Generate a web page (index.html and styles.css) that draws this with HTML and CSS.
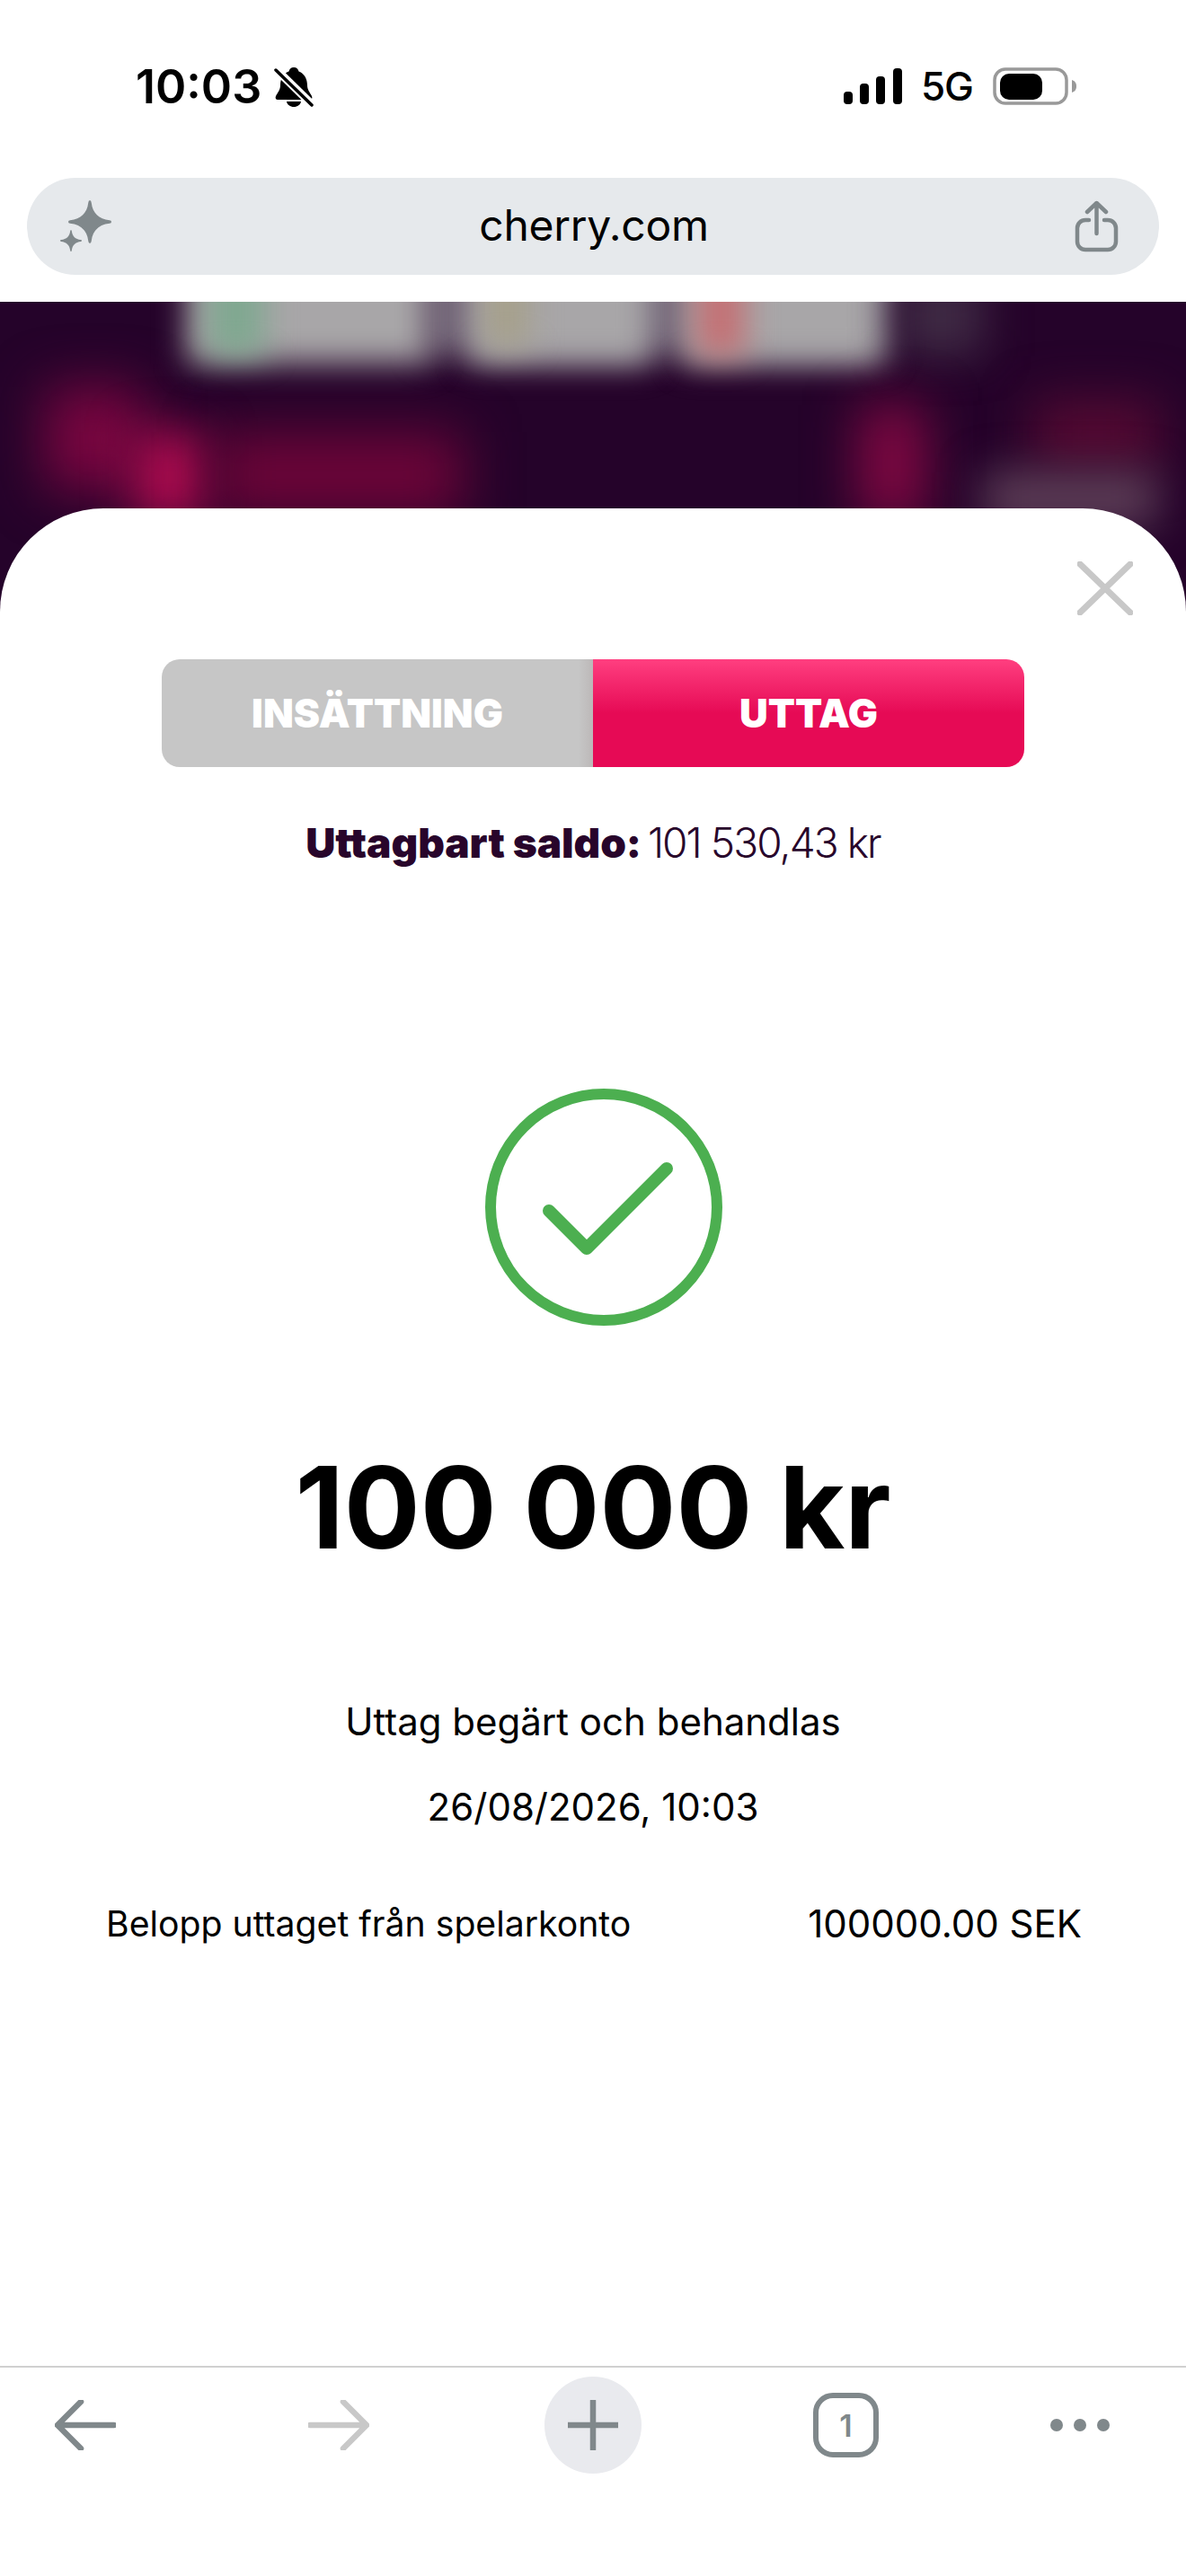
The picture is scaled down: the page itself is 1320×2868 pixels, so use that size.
FILE: index.html
```html
<!DOCTYPE html>
<html>
    <head>
        <title>cherry.com</title>
        <meta charset="utf-8" />
        <link rel="stylesheet" href="styles.css">
    </head>
    <body>
        <header class="status">
            <div class="status-left">
                <span class="time">10:03</span>
                <svg class="bell" viewBox="0 0 44 44">
                    <path d="M22 0c3 0 5 2 5.500 4.500C34 7 37 13 37 20c0 5 3 8 5 12 1 2 0 4-2 4H4c-2 0-3-2-2-4 2-4 5-7 5-12C7 13 10 7 16.500 4.500 17 2 19 0 22 0z" fill="#000"/>
                    <path d="M14 38h16c-.5 3.500-4 6-8 6s-7.500-2.500-8-6z" fill="#000"/>
                    <path d="M1 1l42 41" stroke="#fff" stroke-width="9"/>
                    <path d="M2 3l40 39" stroke="#000" stroke-width="3.500" stroke-linecap="round"/>
                </svg>
            </div>
            <div class="status-right">
                <svg class="signal" viewBox="0 0 65 40">
                    <rect x="0" y="26" width="10" height="14" rx="4" />
                    <rect x="18" y="17" width="10" height="23" rx="4" />
                    <rect x="36" y="9" width="10" height="31" rx="4" />
                    <rect x="55" y="0" width="10" height="40" rx="4" />
                </svg>
                <span class="net">5G</span>
                <svg class="battery" viewBox="0 0 93 42">
                    <rect x="2" y="2" width="80" height="38" rx="12" fill="none" stroke="#999" stroke-width="3.500"/>
                    <rect x="8" y="7" width="47" height="29" rx="10" fill="#000"/>
                    <path d="M88 14c3 1 5 3 5 7s-2 6-5 7z" fill="#999"/>
                </svg>
            </div>
        </header>

        <div class="urlbar">
            <svg class="spark" viewBox="0 0 60 60">
                <path d="M34 1q1.500 0 1.800 3C37 15 44 22 56 23.200q2 .3 2 1.800t-2 1.800C44 28 37 35 35.800 46q-.3 3-1.800 3t-1.800-3C31 35 24 28 12 26.800q-2-.3-2-1.800t2-1.800C24 22 31 15 32.200 4q.3-3 1.800-3z" fill="#80888b"/>
                <path transform="translate(13 46) scale(.5) translate(-34 -25)" d="M34 1q1.500 0 1.800 3C37 15 44 22 56 23.200q2 .3 2 1.800t-2 1.800C44 28 37 35 35.800 46q-.3 3-1.800 3t-1.800-3C31 35 24 28 12 26.800q-2-.3-2-1.800t2-1.800C24 22 31 15 32.200 4q.3-3 1.800-3z" fill="#80888b"/>
            </svg>
            <span class="host">cherry.com</span>
            <svg class="share" viewBox="0 0 50 58">
                <path d="M16 22h-4a9 9 0 0 0-9 9v15a9 9 0 0 0 9 9h25a9 9 0 0 0 9-9V31a9 9 0 0 0-9-9h-4" fill="none" stroke="#80888b" stroke-width="4.500" stroke-linecap="round"/>
                <path d="M24.500 37V3M14 13L24.500 3 35 13" fill="none" stroke="#80888b" stroke-width="4.500" stroke-linecap="round" stroke-linejoin="round"/>
            </svg>
        </div>

        <main class="site">
            <div class="blur blur-band"></div>
            <div class="blur blur-grey blur-a"></div>
            <div class="blur blur-grey blur-b"></div>
            <div class="blur blur-grey blur-c"></div>
            <div class="blur blur-green"></div>
            <div class="blur blur-tan"></div>
            <div class="blur blur-red"></div>
            <div class="blur blur-dim"></div>
            <div class="blur blur-logo1"></div>
            <div class="blur blur-logo2"></div>
            <div class="blur blur-logo3"></div>
            <div class="blur blur-logo4"></div>
            <div class="blur blur-login"></div>
            <div class="blur blur-reg"></div>

            <section class="sheet">
                <svg class="close" viewBox="0 0 62 60">
                    <path d="M3 3l56 54M59 3L3 57" stroke="#c8c8c8" stroke-width="7" stroke-linecap="round"/>
                </svg>

                <div class="tabs">
                    <div class="tab tab-off">INSÄTTNING</div>
                    <div class="tab tab-on">UTTAG</div>
                </div>

                <p class="saldo"><b>Uttagbart saldo:</b> 101 530,43 kr</p>

                <svg class="check" viewBox="0 0 264 264">
                    <circle cx="132" cy="132" r="126" fill="none" stroke="#4caf50" stroke-width="12"/>
                    <path d="M71 136l42 42 89-89" fill="none" stroke="#4caf50" stroke-width="14" stroke-linecap="round" stroke-linejoin="round"/>
                </svg>

                <h1 class="amount">100 000 kr</h1>
                <p class="line line-state">Uttag begärt och behandlas</p>
                <p class="line line-date">26/08/2026, 10:03</p>

                <div class="row">
                    <span class="row-label">Belopp uttaget från spelarkonto</span>
                    <span class="row-value">100000.00 SEK</span>
                </div>
            </section>
        </main>

        <footer class="toolbar">
            <svg class="tool" viewBox="0 0 68 56">
                <path d="M66 28H4M29 2L3 28l26 26" fill="none" stroke="#80888b" stroke-width="6.500" stroke-linecap="round" stroke-linejoin="round"/>
            </svg>
            <svg class="tool tool-fwd" viewBox="0 0 68 56">
                <path d="M2 28h62M39 2l26 26-26 26" fill="none" stroke="#c8c8c8" stroke-width="6.500" stroke-linecap="round" stroke-linejoin="round"/>
            </svg>
            <div class="plus">
                <svg viewBox="0 0 56 56">
                    <path d="M28 1v54M1 28h54" stroke="#80888b" stroke-width="6.500" stroke-linecap="round"/>
                </svg>
            </div>
            <div class="count">1</div>
            <svg class="dots" viewBox="0 0 66 14">
                <circle cx="7" cy="7" r="7" />
                <circle cx="33" cy="7" r="7" />
                <circle cx="59" cy="7" r="7" />
            </svg>
        </footer>
    </body>
</html>
```

FILE: styles.css
```css
* {
    margin: 0;
    padding: 0;
    box-sizing: border-box;
}
html {
    height: 100%;
}
body {
    display: flex;
    flex-direction: column;
    height: 100%;
    background: #fff;
    color: #000;
    font-family: Inter, "Liberation Sans", sans-serif;
    overflow: hidden;
}

/* phone status bar */
.status {
    display: flex;
    justify-content: space-between;
    align-items: flex-start;
    height: 198px;
    padding: 68px 122px 0 151px;
}
.status-left {
    display: flex;
    align-items: center;
    gap: 14px;
}
.time {
    font-size: 52px;
    font-weight: 600;
    line-height: 58px;
}
.bell {
    width: 44px;
    height: 44px;
}
.status-right {
    display: flex;
    align-items: center;
    margin-top: 7px;
}
.signal {
    width: 65px;
    height: 40px;
    fill: #000;
}
.net {
    margin-left: 21px;
    font-size: 44px;
    font-weight: 500;
    line-height: 42px;
    letter-spacing: -1px;
}
.battery {
    width: 93px;
    height: 42px;
    margin-left: 22px;
}

/* browser address bar */
.urlbar {
    display: flex;
    align-items: center;
    justify-content: space-between;
    height: 108px;
    margin: 0 30px;
    padding: 0 44px 0 36px;
    background: #e6e9ec;
    border-radius: 54px;
}
.spark {
    width: 60px;
    height: 60px;
}
.host {
    margin-bottom: 4px;
    font-size: 48px;
    font-weight: 400;
    letter-spacing: -.3px;
}
.share {
    width: 50px;
    height: 58px;
}

/* blurred casino page behind the sheet */
.site {
    position: relative;
    flex: 1;
    display: flex;
    flex-direction: column;
    margin-top: 30px;
    padding-top: 230px;
    background: #25032a;
    overflow: hidden;
}
.blur {
    position: absolute;
    filter: blur(17px);
}
.blur-band {
    top: -40px;
    left: 470px;
    width: 520px;
    height: 100px;
    background: #6f6175;
}
.blur-grey {
    top: -40px;
    height: 109px;
    background: #a8a6a8;
}
.blur-a {
    left: 208px;
    width: 270px;
}
.blur-b {
    left: 522px;
    width: 202px;
}
.blur-c {
    left: 760px;
    width: 222px;
}
.blur-green {
    top: -40px;
    left: 232px;
    width: 62px;
    height: 100px;
    background: #7fa890;
}
.blur-tan {
    top: -40px;
    left: 540px;
    width: 48px;
    height: 90px;
    background: #a6a08a;
}
.blur-red {
    top: -40px;
    left: 775px;
    width: 54px;
    height: 100px;
    background: #c47074;
}
.blur-dim {
    top: -30px;
    left: 1000px;
    width: 95px;
    height: 90px;
    background: #3f2a44;
    filter: blur(24px);
}
.blur-logo1 {
    top: 95px;
    left: 50px;
    width: 110px;
    height: 115px;
    background: #7a0640;
    filter: blur(30px);
}
.blur-logo2 {
    top: 145px;
    left: 150px;
    width: 80px;
    height: 100px;
    background: #b00c50;
    filter: blur(26px);
}
.blur-logo3 {
    top: 145px;
    left: 240px;
    width: 275px;
    height: 95px;
    background: #6c0538;
    filter: blur(30px);
}
.blur-logo4 {
    top: 115px;
    left: 955px;
    width: 76px;
    height: 130px;
    background: #800842;
    filter: blur(28px);
}
.blur-login {
    top: 110px;
    left: 1150px;
    width: 140px;
    height: 75px;
    background: #560a32;
    filter: blur(28px);
}
.blur-reg {
    top: 190px;
    left: 1094px;
    width: 194px;
    height: 60px;
    background: #5e4058;
    filter: blur(24px);
}

/* white payment sheet */
.sheet {
    position: relative;
    flex: 1;
    display: flex;
    flex-direction: column;
    align-items: center;
    padding-top: 168px;
    background: #fff;
    border-radius: 115px 115px 0 0;
}
.close {
    position: absolute;
    top: 59px;
    right: 59px;
    width: 62px;
    height: 60px;
}
.tabs {
    display: flex;
    width: 960px;
    height: 120px;
    border-radius: 20px;
    overflow: hidden;
}
.tab {
    flex: 1;
    display: flex;
    align-items: center;
    justify-content: center;
    color: #fff;
    font-size: 44px;
    font-weight: 900;
}
.tab-off {
    background: linear-gradient(to left, #bcb8b8, #c6c6c6 16px);
}
.tab-on {
    background: linear-gradient(to bottom, #ff3f80, #e60a55 50%);
}
.saldo {
    margin-top: 52px;
    color: #28052b;
    font-size: 46px;
    font-weight: 300;
    line-height: 64px;
    letter-spacing: -1.9px;
}
.saldo b {
    margin-right: -4px;
    font-weight: 900;
    letter-spacing: -.1px;
}
.check {
    width: 264px;
    height: 264px;
    margin: 242px 0 0 24px;
}
.amount {
    margin-top: 138px;
    font-size: 126px;
    font-weight: 700;
    line-height: 128px;
}
.line {
    font-size: 42px;
    line-height: 50px;
}
.line-state {
    margin-top: 150px;
}
.line-date {
    margin-top: 45px;
}
.row {
    display: flex;
    justify-content: space-between;
    align-items: center;
    align-self: stretch;
    margin-top: 80px;
    padding: 0 116px 0 118px;
    line-height: 50px;
}
.row-label {
    font-size: 39.200px;
}
.row-value {
    font-size: 42px;
}

/* browser toolbar */
.toolbar {
    display: flex;
    align-items: center;
    gap: 191px;
    height: 234px;
    padding: 0 0 104px 61px;
    background: #fff;
    border-top: 2px solid #d0d0d0;
}
.tool {
    width: 68px;
    height: 56px;
}
.tool-fwd {
    margin-left: 23px;
}
.plus {
    display: flex;
    align-items: center;
    justify-content: center;
    width: 108px;
    height: 108px;
    margin-left: 4px;
    background: #e9eaee;
    border-radius: 50%;
}
.plus svg {
    width: 56px;
    height: 56px;
}
.count {
    display: flex;
    align-items: center;
    justify-content: center;
    width: 73px;
    height: 72px;
    border: 6.500px solid #80888b;
    border-radius: 22px;
    color: #80888b;
    font-size: 34px;
    font-weight: 600;
}
.dots {
    width: 66px;
    height: 14px;
    fill: #80888b;
}
```
